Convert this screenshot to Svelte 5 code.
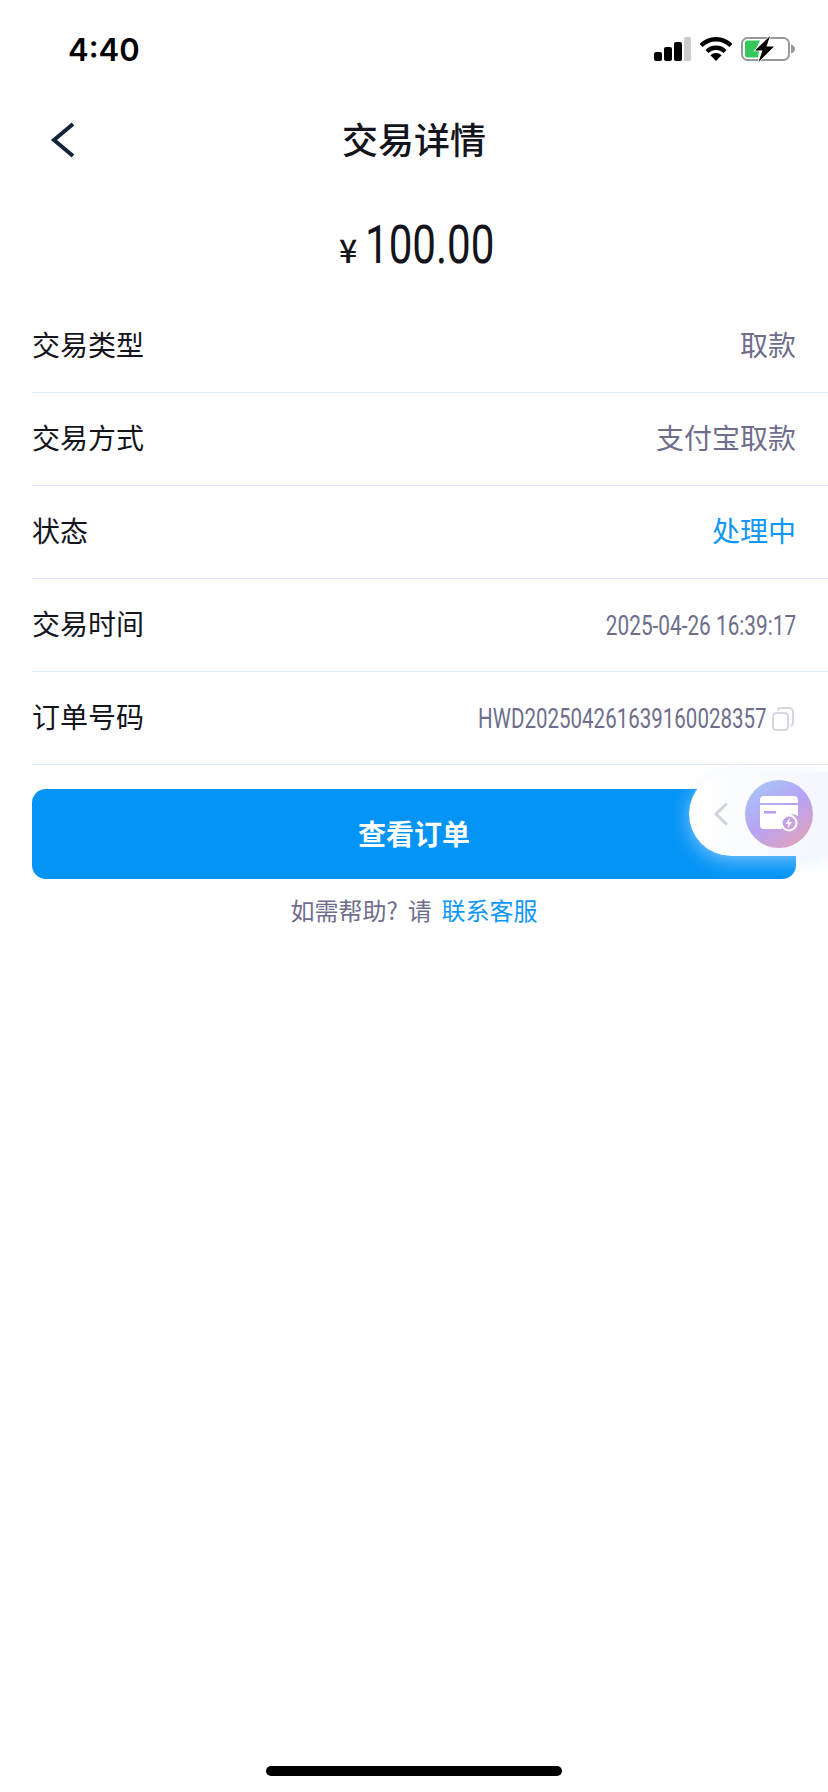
<script>
  const rows = [
    { label: '交易类型', value: '取款', kind: 'cjk' },
    { label: '交易方式', value: '支付宝取款', kind: 'cjk' },
    { label: '状态', value: '处理中', kind: 'status' },
    { label: '交易时间', value: '2025-04-26 16:39:17', kind: 'num' },
    { label: '订单号码', value: 'HWD202504261639160028357', kind: 'order' }
  ]
</script>

<div class="page">
  <header class="status-bar">
    <span class="time">4:40</span>
    <div class="status-icons">
      <svg class="signal" width="37" height="24" viewBox="0 0 37 24">
        <rect x="0" y="15" width="8" height="9" rx="2" fill="#000" />
        <rect x="10" y="10" width="8" height="14" rx="2" fill="#000" />
        <rect x="20" y="5" width="8" height="19" rx="2" fill="#000" />
        <rect x="30" y="0" width="7" height="24" rx="1.5" fill="#ccc" />
      </svg>
      <svg class="wifi" width="32" height="24" viewBox="0 0 32 24">
        <path d="M1 8.500a21 21 0 0 1 30 0" fill="none" stroke="#000" stroke-width="4.4" />
        <path d="M7 14.500a12.600 12.600 0 0 1 18 0" fill="none" stroke="#000" stroke-width="4.4" />
        <path d="M16 24l-5.600-5.800a8 8 0 0 1 11.200 0z" fill="#000" />
      </svg>
      <svg class="battery" width="54" height="26" viewBox="0 0 54 26">
        <rect x="1" y="2" width="47" height="22" rx="5.500" fill="none" stroke="#999" stroke-width="2" />
        <path d="M4 7a2.500 2.500 0 0 1 2.500-2.500H19L15 13l3 1-1 7.500H6.500A2.500 2.500 0 0 1 4 18.500z" fill="#34c759" />
        <path d="M50 8.500c2.500.6 4 2.300 4 4.500s-1.500 3.900-4 4.500z" fill="#999" />
        <path d="M29 0L14 14.500h7.500L17.500 26 33 10.500h-7.500z" fill="#000" stroke="#fff" stroke-width="1.500" paint-order="stroke" />
      </svg>
    </div>
  </header>

  <nav class="nav">
    <svg class="back" width="26" height="36" viewBox="0 0 26 36">
      <path d="M24 2L5 18l19 16" fill="none" stroke="#14253a" stroke-width="4" />
    </svg>
    <h1>交易详情</h1>
  </nav>

  <div class="amount">
    <span class="yen">¥</span><span class="sum">100.00</span>
  </div>

  <ul class="rows">
    {#each rows as row}
      <li class="row">
        <span class="label">{row.label}</span>
        {#if row.kind === 'num'}
          <span class="value narrow date">{row.value}</span>
        {:else if row.kind === 'order'}
          <span class="order">
            <span class="value narrow">{row.value}</span>
            <svg class="copy" width="22" height="24" viewBox="0 0 22 24">
              <rect x="1" y="6" width="15" height="17" rx="3.500" fill="none" stroke="#d6d6e0" stroke-width="2" />
              <path d="M6 3.500A2.500 2.500 0 0 1 8.500 1H17a4 4 0 0 1 4 4v11a2.500 2.500 0 0 1-2.500 2.500" fill="none" stroke="#d6d6e0" stroke-width="2" />
            </svg>
          </span>
        {:else}
          <span class="value" class:active={row.kind === 'status'}>{row.value}</span>
        {/if}
      </li>
    {/each}
  </ul>

  <div class="actions">
    <button class="primary">查看订单</button>
    <p class="help">如需帮助? 请 <a href="#help">联系客服</a></p>
  </div>

  <aside class="float">
    <svg width="14" height="24" viewBox="0 0 14 24">
      <path d="M13 1.500L2 12l11 10.500" fill="none" stroke="#d2d2dc" stroke-width="3" />
    </svg>
    <div class="bubble">
      <svg width="38" height="36" viewBox="0 0 38 36">
        <path d="M4 0h30a4 4 0 0 1 4 4v3H0V4a4 4 0 0 1 4-4z" fill="#fff" />
        <path d="M0 9h38v11a11 11 0 0 0-16 13H4a4 4 0 0 1-4-4z" fill="#fff" />
        <rect x="4" y="15" width="12" height="2.500" fill="#b89cf0" />
        <circle cx="29" cy="27" r="7.500" fill="none" stroke="#fff" stroke-width="2" />
        <path d="M30 21.500l-4.500 6.500h3l-1 4.500 4.500-6.500h-3z" fill="#fff" />
      </svg>
    </div>
  </aside>

  <div class="home"></div>
</div>

<style>
  :global(body) {
    margin: 0;
    background: #fff;
  }

  .page {
    position: relative;
    width: 828px;
    height: 1792px;
    overflow: hidden;
    font-family: "Noto Sans CJK SC", "Noto Sans", sans-serif;
    color: #14141c;
  }

  .status-bar {
    display: flex;
    justify-content: space-between;
    align-items: center;
    height: 50px;
    padding: 24px 33px 0 68px;
  }

  .time {
    font-family: Inter, sans-serif;
    font-size: 31px;
    font-weight: 600;
    color: #000;
    margin-top: 1px;
  }

  .status-icons {
    display: flex;
    align-items: center;
    gap: 10px;
  }

  .signal {
    margin-right: -1px;
  }

  .battery {
    margin-left: -1px;
  }

  .nav {
    position: relative;
    display: flex;
    justify-content: center;
    align-items: center;
    height: 88px;
    margin-top: 21px;
  }

  .back {
    position: absolute;
    left: 49px;
    top: 27px;
  }

  h1 {
    margin: 0 0 2px;
    font-size: 36px;
    font-weight: 500;
    line-height: 1;
  }

  .amount {
    display: flex;
    justify-content: center;
    align-items: baseline;
    height: 117px;
    padding: 32px 0 0 6px;
    box-sizing: border-box;
  }

  .yen {
    font-size: 32px;
    font-weight: 500;
    margin-right: 8px;
  }

  .sum {
    font-family: Roboto, sans-serif;
    font-size: 54px;
    line-height: 60px;
    display: inline-block;
    width: 130px;
    transform: scaleX(0.78);
    transform-origin: left;
    white-space: nowrap;
  }

  .rows {
    list-style: none;
    margin: 0;
    padding: 0 0 0 32px;
  }

  .row {
    display: flex;
    justify-content: space-between;
    align-items: center;
    height: 88px;
    padding: 0 32px 4px 0;
    border-bottom: 1px solid #dfe7fb;
    font-size: 28px;
  }

  .value {
    color: #6e6e8c;
  }

  .value.active {
    color: #0f97f6;
  }

  .narrow {
    font-family: Roboto, sans-serif;
    font-size: 27px;
    display: inline-block;
    transform: scaleX(0.77);
    white-space: nowrap;
  }

  .date {
    padding-top: 6px;
    transform-origin: right;
  }

  .order {
    display: flex;
    align-items: center;
    gap: 5px;
    margin-right: 2px;
    padding-top: 6px;
  }

  .order .value {
    transform: scaleX(0.76);
    transform-origin: right;
  }

  .actions {
    padding: 24px 32px 0;
  }

  .primary {
    display: block;
    width: 100%;
    height: 90px;
    padding: 0 0 2px;
    border: 0;
    border-radius: 14px;
    background: #0394f6;
    color: #fff;
    font-family: inherit;
    font-size: 28px;
    font-weight: 700;
  }

  .help {
    margin: 13px 0 0;
    text-align: center;
    font-size: 24px;
    word-spacing: 4.500px;
    color: #6e6e8c;
  }

  .help a {
    color: #0f97f6;
    text-decoration: none;
  }

  .float {
    position: absolute;
    left: 689px;
    top: 772px;
    width: 139px;
    height: 84px;
    display: flex;
    align-items: center;
    gap: 17px;
    padding-left: 25px;
    box-sizing: border-box;
    border-radius: 42px 0 0 42px;
    background: linear-gradient(90deg, #fff, #f3f6fd);
    box-shadow: 0 4px 20px rgba(215, 230, 255, 0.6);
  }

  .bubble {
    display: flex;
    justify-content: center;
    align-items: center;
    flex: none;
    width: 68px;
    height: 68px;
    border-radius: 50%;
    background: linear-gradient(145deg, #a4cdf8, #b7a2f3 50%, #eaa4b0);
  }

  .home {
    position: absolute;
    left: 266px;
    top: 1766px;
    width: 296px;
    height: 10px;
    border-radius: 5px;
    background: #000;
  }
</style>
